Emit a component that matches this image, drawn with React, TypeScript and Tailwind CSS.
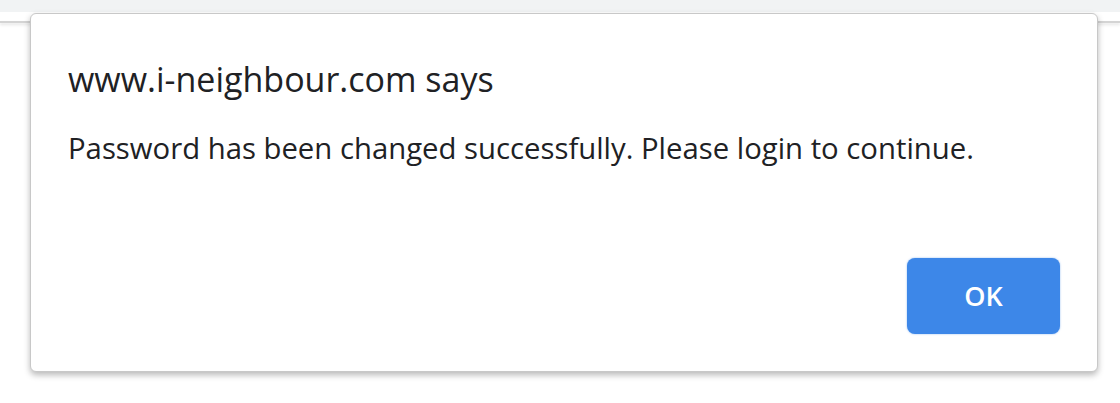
import React from "react";

export default function App() {
  return (
    <div className="relative w-[1120px] h-[403px] bg-white overflow-hidden" style={{ fontFamily: "'Open Sans', 'Noto Sans', sans-serif" }}>
      <div className="h-[12px] bg-[#f1f3f4]" />
      <div className="h-[9px]" />
      <div className="h-[2px] bg-[#d4d4d4] shadow-[0_2px_3px_rgba(0,0,0,0.12)]" />
      <div className="absolute left-[30px] top-[13px] w-[1068px] h-[359px] bg-white rounded-[6px] border border-[#c8c8c8] shadow-[0_3px_6px_rgba(0,0,0,0.28)] flex flex-col px-[37px] pb-[37px]">
        <div className="pt-[45px] text-[34px] leading-[40px] text-[#202124]">www.i-neighbour.com says</div>
        <div className="mt-[31px] text-[29.3px] leading-[36px] text-[#202124]">Password has been changed successfully. Please login to continue.</div>
        <div className="flex-1" />
        <div className="flex justify-end">
          <button className="w-[153px] h-[76px] rounded-[8px] bg-[#3d87e8] text-white text-[27px] font-semibold shadow-[0_0_2px_rgba(61,135,232,0.6)]">OK</button>
        </div>
      </div>
    </div>
  );
}
